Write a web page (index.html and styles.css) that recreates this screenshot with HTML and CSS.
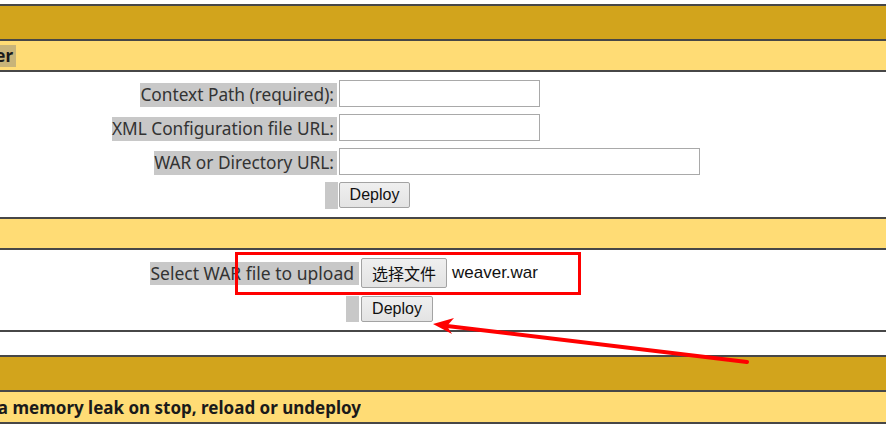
FILE: index.html
```html
<!DOCTYPE html>
<html lang="en">
<head>
<meta charset="utf-8">
<title>Tomcat Manager - Deploy</title>
<link rel="stylesheet" href="styles.css">
</head>
<body>
<div class="page">
  <div class="band band-gold"></div>
  <div class="band band-light">
    <div class="title-clip title-clip-short"><span class="title sel">Deploy directory or WAR file located on server</span></div>
  </div>
  <form class="band form form-server">
    <label class="label sel">Context Path (required):</label>
    <input class="text text-short" type="text">
    <label class="label sel">XML Configuration file URL:</label>
    <input class="text text-short" type="text">
    <label class="label sel">WAR or Directory URL:</label>
    <input class="text text-long" type="text">
    <span class="bar sel"></span>
    <div class="cell"><button class="btn btn-deploy" type="button">Deploy</button></div>
  </form>
  <div class="band band-light"></div>
  <form class="band form form-upload">
    <label class="label label-upload sel">Select WAR file to upload</label>
    <div class="file-picker">
      <button class="btn btn-file" type="button">选择文件</button>
      <span class="file-name">weaver.war</span>
    </div>
    <span class="bar bar-upload sel"></span>
    <div class="cell"><button class="btn btn-deploy btn-deploy2" type="button">Deploy</button></div>
  </form>
  <div class="band band-white"></div>
  <div class="band band-gold"></div>
  <div class="band band-light band-last">
    <div class="title-clip title-clip-long"><span class="title">Check to see if a web application has caused a memory leak on stop, reload or undeploy</span></div>
  </div>

  <div class="annot-box"></div>
  <svg class="annot-arrow" width="886" height="431" viewBox="0 0 886 431">
    <line x1="447" y1="326" x2="747" y2="362" stroke="#ff0000" stroke-width="4" stroke-linecap="round"/>
    <path d="M433 324 L454 318 L447 326 L452 334 Z" fill="#ff0000"/>
  </svg>
</div>
</body>
</html>
```
FILE: styles.css
```css
* { box-sizing: border-box; }
html, body { margin: 0; padding: 0; }
body {
  background: #ffffff;
  font-family: "Noto Sans", "DejaVu Sans", sans-serif;
  color: #222222;
}
.page {
  position: relative;
  width: 886px;
  height: 431px;
  overflow: hidden;
  padding-top: 4px;
}
.band {
  border-top: 2px solid #474747;
  width: 100%;
}
.band-gold { background: #d2a41c; height: 35px; }
.band-light {
  background: #ffdc75;
  height: 31px;
  display: flex;
  align-items: center;
}
.band-white { background: #ffffff; height: 25px; }
.band-last {
  height: 34px;
  border-bottom: 2px solid #474747;
  padding-top: 2px;
}
.sel { background: rgba(128, 128, 128, 0.43); }

.title-clip {
  display: flex;
  justify-content: flex-end;
  overflow: hidden;
  white-space: nowrap;
  flex-shrink: 0;
}
.title-clip-short { width: 16px; }
.title-clip-long { width: 361px; }
.title {
  flex-shrink: 0;
  font-weight: bold;
  font-size: 17px;
  line-height: 22px;
  color: #1a1a1a;
}
.title-clip-short .title { padding-right: 3px; }

.form {
  display: grid;
  column-gap: 2px;
  margin: 0;
}
.form-server {
  height: 147px;
  padding-top: 8px;
  grid-template-columns: 337px max-content;
  grid-auto-rows: 27px;
  row-gap: 7px;
  align-content: start;
}
.form-upload {
  height: 82px;
  padding-top: 8px;
  grid-template-columns: 359px max-content;
  grid-template-rows: 30px 26px;
  row-gap: 8px;
  align-content: start;
}
.label {
  justify-self: end;
  align-self: end;
  font-size: 17.3px;
  line-height: 24px;
  padding-right: 3px;
  color: #333333;
  white-space: nowrap;
}
.label-upload {
  align-self: center;
  line-height: 23px;
  padding-right: 5px;
  font-size: 17.5px;
}
.text {
  height: 27px;
  border: 1px solid #a9a9a9;
  background: #ffffff;
  margin: 0;
  padding: 1px 2px;
}
.text-short { width: 201px; }
.text-long { width: 361px; }
.bar {
  justify-self: end;
  width: 13px;
  height: 27px;
  margin-right: -1px;
}
.bar-upload { width: 13px; height: 26px; margin-right: 0; }
.cell { display: flex; align-items: flex-start; }
.btn {
  font-family: "Liberation Sans", Arial, sans-serif;
  font-size: 16px;
  color: #111111;
  background: linear-gradient(#efefef, #e3e3e3);
  border: 1px solid #a3a3a3;
  border-radius: 2px;
  padding: 0;
  margin: 0;
}
.btn-deploy { width: 71px; height: 26px; }
.btn-deploy2 { width: 72px; }
.file-picker {
  display: flex;
  align-items: center;
  gap: 5px;
}
.btn-file {
  width: 86px;
  height: 30px;
  font-family: "Noto Sans CJK SC", "Liberation Sans", sans-serif;
  font-size: 16px;
}
.file-name {
  font-family: "Liberation Sans", Arial, sans-serif;
  font-size: 17px;
  color: #111111;
}

.annot-box {
  position: absolute;
  left: 235px;
  top: 252px;
  width: 346px;
  height: 43px;
  border: 3px solid #ff0000;
}
.annot-arrow {
  position: absolute;
  left: 0;
  top: 0;
  pointer-events: none;
}
```
